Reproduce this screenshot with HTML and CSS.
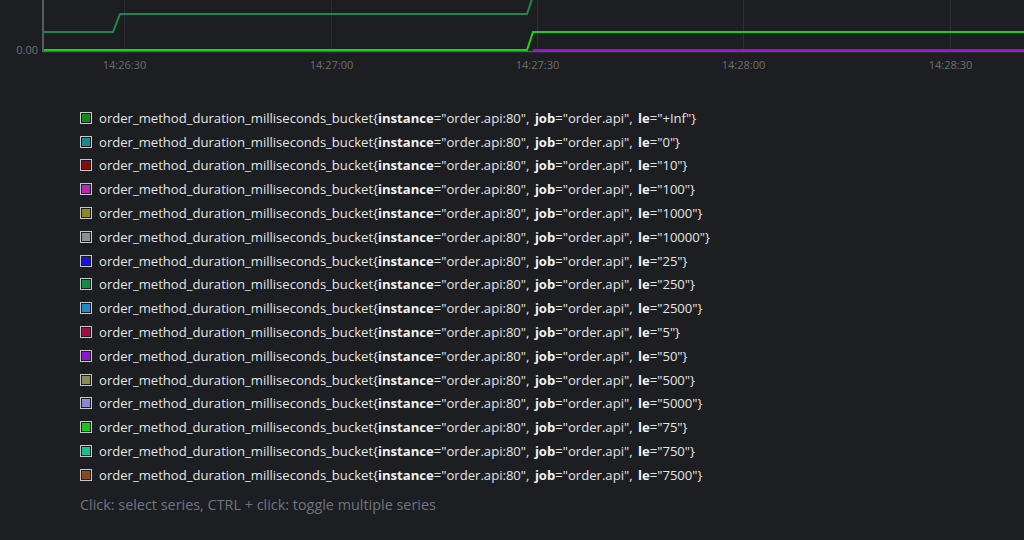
FILE: index.html
```html
<!DOCTYPE html>
<html>
<head>
<meta charset="utf-8">
<link rel="stylesheet" href="styles.css">
</head>
<body>
<div class="page">
  <div class="chart">
    <svg width="1024" height="80" viewBox="0 0 1024 80">
      <g stroke="#2a2d32" stroke-width="1">
        <line x1="124.5" y1="0" x2="124.5" y2="50"/>
        <line x1="331.5" y1="0" x2="331.5" y2="50"/>
        <line x1="537.5" y1="0" x2="537.5" y2="50"/>
        <line x1="743.5" y1="0" x2="743.5" y2="50"/>
        <line x1="950.5" y1="0" x2="950.5" y2="50"/>
      </g>
      <line x1="43" y1="0" x2="43" y2="52" stroke="#5a5a5a" stroke-width="2"/>
      <line x1="42" y1="51.5" x2="1024" y2="51.5" stroke="#5a5a5a" stroke-width="1.5"/>
      <polyline points="44,32 113,32 120,14 527,14 533,-4" fill="none" stroke="#1a8a4a" stroke-width="2"/>
      <polyline points="533,50 1024,50" fill="none" stroke="#9a10d0" stroke-width="2"/>
      <polyline points="44,50 527,50 533,32 1024,32" fill="none" stroke="#1ed01e" stroke-width="2"/>
      <text x="38" y="54" class="ylab" text-anchor="end">0.00</text>
      <text x="124.5" y="69" class="xlab" text-anchor="middle">14:26:30</text>
      <text x="331.5" y="69" class="xlab" text-anchor="middle">14:27:00</text>
      <text x="537.5" y="69" class="xlab" text-anchor="middle">14:27:30</text>
      <text x="743.5" y="69" class="xlab" text-anchor="middle">14:28:00</text>
      <text x="950.5" y="69" class="xlab" text-anchor="middle">14:28:30</text>
    </svg>
  </div>
  <ul class="legend">
    <li><span class="sw"><span style="background:#0f8a1a"></span></span><span class="t">order_method_duration_milliseconds_bucket{<b>instance</b>="order.api:80", <b>job</b>="order.api", <b>le</b>="+Inf"}</span></li>
    <li><span class="sw"><span style="background:#168a8a"></span></span><span class="t">order_method_duration_milliseconds_bucket{<b>instance</b>="order.api:80", <b>job</b>="order.api", <b>le</b>="0"}</span></li>
    <li><span class="sw"><span style="background:#8a0a0a"></span></span><span class="t">order_method_duration_milliseconds_bucket{<b>instance</b>="order.api:80", <b>job</b>="order.api", <b>le</b>="10"}</span></li>
    <li><span class="sw"><span style="background:#b42ab4"></span></span><span class="t">order_method_duration_milliseconds_bucket{<b>instance</b>="order.api:80", <b>job</b>="order.api", <b>le</b>="100"}</span></li>
    <li><span class="sw"><span style="background:#8a8a1e"></span></span><span class="t">order_method_duration_milliseconds_bucket{<b>instance</b>="order.api:80", <b>job</b>="order.api", <b>le</b>="1000"}</span></li>
    <li><span class="sw"><span style="background:#8e8e8e"></span></span><span class="t">order_method_duration_milliseconds_bucket{<b>instance</b>="order.api:80", <b>job</b>="order.api", <b>le</b>="10000"}</span></li>
    <li><span class="sw"><span style="background:#1414d8"></span></span><span class="t">order_method_duration_milliseconds_bucket{<b>instance</b>="order.api:80", <b>job</b>="order.api", <b>le</b>="25"}</span></li>
    <li><span class="sw"><span style="background:#148a48"></span></span><span class="t">order_method_duration_milliseconds_bucket{<b>instance</b>="order.api:80", <b>job</b>="order.api", <b>le</b>="250"}</span></li>
    <li><span class="sw"><span style="background:#2488c8"></span></span><span class="t">order_method_duration_milliseconds_bucket{<b>instance</b>="order.api:80", <b>job</b>="order.api", <b>le</b>="2500"}</span></li>
    <li><span class="sw"><span style="background:#a0103e"></span></span><span class="t">order_method_duration_milliseconds_bucket{<b>instance</b>="order.api:80", <b>job</b>="order.api", <b>le</b>="5"}</span></li>
    <li><span class="sw"><span style="background:#8a18d0"></span></span><span class="t">order_method_duration_milliseconds_bucket{<b>instance</b>="order.api:80", <b>job</b>="order.api", <b>le</b>="50"}</span></li>
    <li><span class="sw"><span style="background:#8a8a58"></span></span><span class="t">order_method_duration_milliseconds_bucket{<b>instance</b>="order.api:80", <b>job</b>="order.api", <b>le</b>="500"}</span></li>
    <li><span class="sw"><span style="background:#8a8ad0"></span></span><span class="t">order_method_duration_milliseconds_bucket{<b>instance</b>="order.api:80", <b>job</b>="order.api", <b>le</b>="5000"}</span></li>
    <li><span class="sw"><span style="background:#16c816"></span></span><span class="t">order_method_duration_milliseconds_bucket{<b>instance</b>="order.api:80", <b>job</b>="order.api", <b>le</b>="75"}</span></li>
    <li><span class="sw"><span style="background:#18c08e"></span></span><span class="t">order_method_duration_milliseconds_bucket{<b>instance</b>="order.api:80", <b>job</b>="order.api", <b>le</b>="750"}</span></li>
    <li><span class="sw"><span style="background:#8a4a18"></span></span><span class="t">order_method_duration_milliseconds_bucket{<b>instance</b>="order.api:80", <b>job</b>="order.api", <b>le</b>="7500"}</span></li>
  </ul>
  <p class="help">Click: select series, CTRL + click: toggle multiple series</p>
</div>
</body>
</html>
```
FILE: styles.css
```css
html, body {
  margin: 0;
  padding: 0;
  background: #1c1e22;
  width: 1024px;
  height: 540px;
  overflow: hidden;
}
.page {
  font-family: "Open Sans", "Noto Sans", sans-serif;
  color: #e4e4e4;
}
.chart svg {
  display: block;
}
.ylab, .xlab {
  font-family: "Open Sans", sans-serif;
  font-size: 11px;
  fill: #6e6e6e;
}
.legend {
  list-style: none;
  margin: 0;
  padding: 26px 0 0 80px;
}
.legend li {
  display: flex;
  align-items: center;
  height: 23.8px;
  font-size: 13.1px;
  word-spacing: 2px;
  white-space: nowrap;
}
.legend b {
  font-weight: 700;
  color: #f2f2f2;
}
.sw {
  display: flex;
  width: 8px;
  height: 8px;
  border: 1px solid #c8c8c8;
  padding: 1px;
  background: #1c1e22;
  box-sizing: content-box;
  margin-right: 7px;
  flex: none;
}
.sw > span {
  flex: 1;
}
.help {
  margin: 8px 0 0 80px;
  font-size: 14.4px;
  color: #6e7580;
}
```
